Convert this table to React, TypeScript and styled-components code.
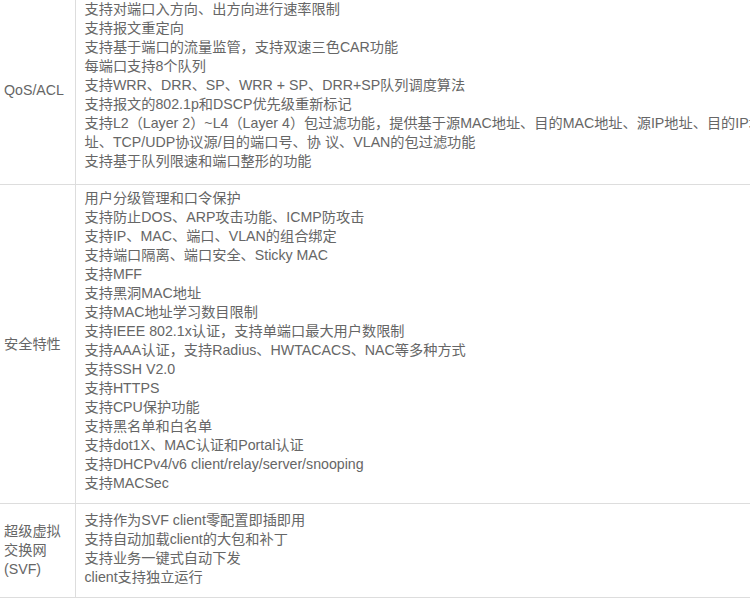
import styled, { createGlobalStyle } from 'styled-components'

interface SpecRow {
  label: string
  items: string[]
  padTop: number
  padBottom: number
}

const rows: SpecRow[] = [
  {
    label: 'QoS/ACL',
    padTop: 4,
    padBottom: 13,
    items: [
      '支持对端口入方向、出方向进行速率限制',
      '支持报文重定向',
      '支持基于端口的流量监管，支持双速三色CAR功能',
      '每端口支持8个队列',
      '支持WRR、DRR、SP、WRR + SP、DRR+SP队列调度算法',
      '支持报文的802.1p和DSCP优先级重新标记',
      '支持L2（Layer 2）~L4（Layer 4）包过滤功能，提供基于源MAC地址、目的MAC地址、源IP地址、目的IP地址、TCP/UDP协议源/目的端口号、协 议、VLAN的包过滤功能',
      '支持基于队列限速和端口整形的功能',
    ],
  },
  {
    label: '安全特性',
    padTop: 4,
    padBottom: 10,
    items: [
      '用户分级管理和口令保护',
      '支持防止DOS、ARP攻击功能、ICMP防攻击',
      '支持IP、MAC、端口、VLAN的组合绑定',
      '支持端口隔离、端口安全、Sticky MAC',
      '支持MFF',
      '支持黑洞MAC地址',
      '支持MAC地址学习数目限制',
      '支持IEEE 802.1x认证，支持单端口最大用户数限制',
      '支持AAA认证，支持Radius、HWTACACS、NAC等多种方式',
      '支持SSH V2.0',
      '支持HTTPS',
      '支持CPU保护功能',
      '支持黑名单和白名单',
      '支持dot1X、MAC认证和Portal认证',
      '支持DHCPv4/v6 client/relay/server/snooping',
      '支持MACSec',
    ],
  },
  {
    label: '超级虚拟交换网(SVF)',
    padTop: 7,
    padBottom: 10,
    items: [
      '支持作为SVF client零配置即插即用',
      '支持自动加载client的大包和补丁',
      '支持业务一键式自动下发',
      'client支持独立运行',
    ],
  },
]

const GlobalStyle = createGlobalStyle`
  html, body {
    margin: 0;
    padding: 0;
    background: #fff;
    overflow: hidden;
  }
  body {
    font-family: "Liberation Sans", Arial, "Noto Sans CJK SC", sans-serif;
  }
`

const App = () => {
  return (
    <>
      <GlobalStyle />
      <SpecTable>
        <colgroup>
          <col style={{ width: 75 }} />
          <col />
        </colgroup>
        <tbody>
          {rows.map((row) => (
            <tr key={row.label}>
              <LabelCell>{row.label}</LabelCell>
              <ValueCell $top={row.padTop} $bottom={row.padBottom}>
                {row.items.map((item) => (
                  <Line key={item}>{item}</Line>
                ))}
              </ValueCell>
            </tr>
          ))}
        </tbody>
      </SpecTable>
    </>
  )
}

export default App

const SpecTable = styled.table`
  width: 785px;
  margin-top: -5px;
  table-layout: fixed;
  border-collapse: collapse;
  font-size: 14.2px;
  line-height: 19px;
  color: #666;
`

const LabelCell = styled.td`
  padding: 0 4px;
  vertical-align: middle;
  border-top: 1px solid #ddd;
  border-bottom: 1px solid #ddd;
  border-right: 1px solid #ddd;
`

const ValueCell = styled.td<{ $top: number; $bottom: number }>`
  padding: ${(p) => p.$top}px 10px ${(p) => p.$bottom}px 9px;
  vertical-align: top;
  border-top: 1px solid #ddd;
  border-bottom: 1px solid #ddd;
`

const Line = styled.div`
  white-space: normal;
`
